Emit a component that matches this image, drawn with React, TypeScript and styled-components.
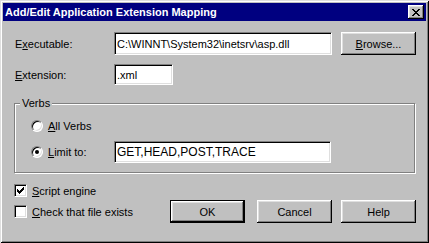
import styled, { createGlobalStyle } from 'styled-components';

const GlobalStyle = createGlobalStyle`
  html, body {
    margin: 0;
    padding: 0;
    background: #c0c0c0;
  }
  body {
    font-family: "Liberation Sans", Arial, sans-serif;
    font-size: 11px;
    color: #000;
  }
`;

const Window = styled.div`
  box-sizing: border-box;
  width: 429px;
  height: 243px;
  padding: 3px;
  background: #c0c0c0;
  box-shadow: inset 1px 1px #dfdfdf, inset -1px -1px #000,
    inset 2px 2px #fff, inset -2px -2px #808080;
  display: flex;
  flex-direction: column;
`;

const TitleBar = styled.div`
  height: 18px;
  background: #000080;
  display: flex;
  align-items: center;
  justify-content: space-between;
  padding: 0 2px;
`;

const Title = styled.span`
  color: #fff;
  font-weight: bold;
  font-size: 11px;
  line-height: 13px;
`;

const CloseButton = styled.button`
  box-sizing: border-box;
  width: 16px;
  height: 14px;
  padding: 0;
  border: none;
  background: #c0c0c0;
  display: flex;
  align-items: center;
  justify-content: center;
  box-shadow: inset -1px -1px #000, inset 1px 1px #fff,
    inset -2px -2px #808080, inset 2px 2px #dfdfdf;
`;

const Body = styled.div`
  flex: 1;
  padding: 11px 10px 0 11px;
  display: flex;
  flex-direction: column;
`;

const FieldGrid = styled.div`
  display: grid;
  grid-template-columns: 91px 218px 75px;
  grid-template-rows: 23px 21px;
  column-gap: 9px;
  row-gap: 9px;
  align-items: center;
`;

const Label = styled.label`
  padding-left: 1px;
  white-space: nowrap;
`;

const TextBox = styled.input<{ $width?: number; $mono?: boolean }>`
  box-sizing: border-box;
  width: ${({ $width }) => ($width ? `${$width}px` : '100%')};
  height: 100%;
  margin: 0;
  padding: 0 2px;
  border: 1px solid;
  border-color: #808080 #fff #fff #808080;
  box-shadow: inset 1px 1px #000, inset -1px -1px #dfdfdf;
  background: #fff;
  font-family: "Liberation Sans", Arial, sans-serif;
  font-size: ${({ $mono }) => ($mono ? '12px' : '11px')};
  color: #000;
  outline: none;
`;

const LimitBox = styled(TextBox)`
  grid-column: 2;
  grid-row: 2;
`;

const PushButton = styled.button<{ $default?: boolean }>`
  box-sizing: border-box;
  width: 75px;
  height: 23px;
  margin: 0;
  padding: 0;
  border: ${({ $default }) => ($default ? '1px solid #000' : 'none')};
  background: #c0c0c0;
  font-family: "Liberation Sans", Arial, sans-serif;
  font-size: 11px;
  color: #000;
  box-shadow: inset -1px -1px #000, inset 1px 1px #fff,
    inset -2px -2px #808080, inset 2px 2px #dfdfdf;
`;

const Group = styled.fieldset`
  margin: 12px 1px 0 0;
  padding: 10px 0 9px 16px;
  border: 1px solid #808080;
  box-shadow: inset 1px 1px #fff, 1px 1px #fff;
  display: grid;
  grid-template-columns: 83px 217px;
  grid-template-rows: 12px 22px;
  row-gap: 9px;
  align-items: center;
`;

const Legend = styled.legend`
  margin-left: -11px;
  padding: 0 2px;
  line-height: 13px;
  background: #c0c0c0;
`;

const OptionRow = styled.div<{ $row?: number }>`
  grid-column: 1;
  grid-row: ${({ $row }) => $row ?? 'auto'};
  display: flex;
  align-items: center;
  gap: 5px;
  white-space: nowrap;
`;

const Radio = styled.span<{ $checked?: boolean }>`
  box-sizing: border-box;
  width: 12px;
  height: 12px;
  border-radius: 50%;
  border: 1px solid;
  border-color: #808080 #fff #fff #808080;
  box-shadow: inset 1px 1px #000, inset -1px -1px #dfdfdf;
  background: #fff;
  display: flex;
  align-items: center;
  justify-content: center;

  &::after {
    content: '';
    width: 4px;
    height: 4px;
    border-radius: 50%;
    background: ${({ $checked }) => ($checked ? '#000' : 'transparent')};
  }
`;

const Footer = styled.div`
  margin-top: 11px;
  display: grid;
  grid-template-columns: 1fr auto;
  grid-template-rows: 13px 23px;
  row-gap: 3px;
  align-items: center;
`;

const CheckBox = styled.span`
  box-sizing: border-box;
  width: 13px;
  height: 13px;
  border: 1px solid;
  border-color: #808080 #fff #fff #808080;
  box-shadow: inset 1px 1px #000, inset -1px -1px #dfdfdf;
  background: #fff;
  display: flex;
  align-items: center;
  justify-content: center;
`;

const ButtonRow = styled.div`
  grid-column: 2;
  grid-row: 2;
  display: flex;
  gap: 9px;

  & > :first-child {
    margin-right: 3px;
  }
`;

const closeGlyph = [
  'XX....XX',
  '.XX..XX.',
  '..XXXX..',
  '...XX...',
  '..XXXX..',
  '.XX..XX.',
  'XX....XX',
];

const checkGlyph = [
  '......X',
  '.....XX',
  'X...XXX',
  'XX.XXX.',
  'XXXXX..',
  '.XXX...',
  '..X....',
];

function PixelGlyph({ rows }: { rows: string[] }) {
  return (
    <svg
      width={rows[0].length}
      height={rows.length}
      shapeRendering="crispEdges"
    >
      {rows.flatMap((row, y) =>
        row
          .split('')
          .map((c, x) =>
            c === 'X' ? (
              <rect key={`${x}-${y}`} x={x} y={y} width={1} height={1} fill="#000" />
            ) : null,
          ),
      )}
    </svg>
  );
}

export default function App() {
  return (
    <>
      <GlobalStyle />
      <Window>
        <TitleBar>
          <Title>Add/Edit Application Extension Mapping</Title>
          <CloseButton>
            <PixelGlyph rows={closeGlyph} />
          </CloseButton>
        </TitleBar>
        <Body>
          <FieldGrid>
            <Label>
              E<u>x</u>ecutable:
            </Label>
            <TextBox readOnly defaultValue={'C:\\WINNT\\System32\\inetsrv\\asp.dll'} />
            <PushButton>
              <u>B</u>rowse...
            </PushButton>
            <Label>
              <u>E</u>xtension:
            </Label>
            <TextBox readOnly $width={59} defaultValue=".xml" />
          </FieldGrid>

          <Group>
            <Legend>Verbs</Legend>
            <OptionRow $row={1}>
              <Radio />
              <span>
                <u>A</u>ll Verbs
              </span>
            </OptionRow>
            <OptionRow $row={2}>
              <Radio $checked />
              <span>
                <u>L</u>imit to:
              </span>
            </OptionRow>
            <LimitBox readOnly $mono defaultValue="GET,HEAD,POST,TRACE" />
          </Group>

          <Footer>
            <OptionRow $row={1}>
              <CheckBox>
                <PixelGlyph rows={checkGlyph} />
              </CheckBox>
              <span>
                <u>S</u>cript engine
              </span>
            </OptionRow>
            <OptionRow $row={2}>
              <CheckBox />
              <span>
                <u>C</u>heck that file exists
              </span>
            </OptionRow>
            <ButtonRow>
              <PushButton $default>OK</PushButton>
              <PushButton>Cancel</PushButton>
              <PushButton>Help</PushButton>
            </ButtonRow>
          </Footer>
        </Body>
      </Window>
    </>
  );
}
